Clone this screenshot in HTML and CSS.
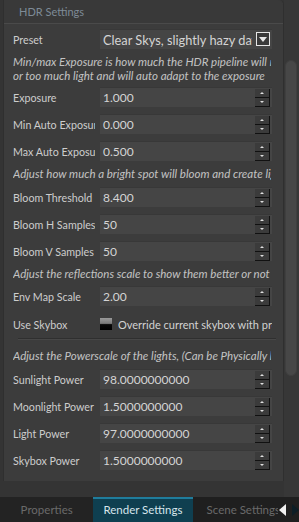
FILE: index.html
```html
<!DOCTYPE html>
<html>
<head>
<meta charset="utf-8">
<link rel="stylesheet" href="styles.css">
</head>
<body>
<div class="app">
  <div class="main">
    <div class="content">
      <div class="group">
        <div class="group-title">HDR Settings</div>
        <div class="group-body">
          <div class="row row-preset">
            <div class="label">Preset</div>
            <div class="combo">
              <span class="combo-text">Clear Skys, slightly hazy day</span>
              <span class="combo-btn"><svg width="8" height="5" viewBox="0 0 8 5"><path d="M0 0H8L4 5Z" fill="#e8e8e8"/></svg></span>
            </div>
          </div>
          <div class="desc d1">Min/max Exposure is how much the HDR pipeline will react to too little<br>or too much light and will auto adapt to the exposure</div>

          <div class="row r-after1">
            <div class="label">Exposure</div>
            <div class="field"><span class="val">1.000</span><span class="spin"><span class="sb"><i class="up"></i></span><span class="sb"><i class="dn"></i></span></span></div>
          </div>
          <div class="row">
            <div class="label">Min Auto Exposure</div>
            <div class="field"><span class="val">0.000</span><span class="spin"><span class="sb"><i class="up"></i></span><span class="sb"><i class="dn"></i></span></span></div>
          </div>
          <div class="row">
            <div class="label">Max Auto Exposure</div>
            <div class="field"><span class="val">0.500</span><span class="spin"><span class="sb"><i class="up"></i></span><span class="sb"><i class="dn"></i></span></span></div>
          </div>

          <div class="desc d2">Adjust how much a bright spot will bloom and create light</div>

          <div class="row r-first">
            <div class="label">Bloom Threshold</div>
            <div class="field"><span class="val">8.400</span><span class="spin"><span class="sb"><i class="up"></i></span><span class="sb"><i class="dn"></i></span></span></div>
          </div>
          <div class="row">
            <div class="label">Bloom H Samples</div>
            <div class="field"><span class="val">50</span><span class="spin"><span class="sb"><i class="up"></i></span><span class="sb"><i class="dn"></i></span></span></div>
          </div>
          <div class="row">
            <div class="label">Bloom V Samples</div>
            <div class="field"><span class="val">50</span><span class="spin"><span class="sb"><i class="up"></i></span><span class="sb"><i class="dn"></i></span></span></div>
          </div>

          <div class="desc d2">Adjust the reflections scale to show them better or not</div>

          <div class="row r-env">
            <div class="label">Env Map Scale</div>
            <div class="field"><span class="val">2.00</span><span class="spin"><span class="sb"><i class="up"></i></span><span class="sb"><i class="dn"></i></span></span></div>
          </div>
          <div class="row r-check">
            <div class="label">Use Skybox</div>
            <div class="check-wrap"><span class="checkbox"></span><span class="check-text">Override current skybox with preset</span></div>
          </div>
          <div class="sep"></div>
          <div class="desc d3">Adjust the Powerscale of the lights, (Can be Physically based)</div>

          <div class="row r-first">
            <div class="label">Sunlight Power</div>
            <div class="field"><span class="val">98.0000000000</span><span class="spin"><span class="sb"><i class="up"></i></span><span class="sb"><i class="dn"></i></span></span></div>
          </div>
          <div class="row">
            <div class="label">Moonlight Power</div>
            <div class="field"><span class="val">1.5000000000</span><span class="spin"><span class="sb"><i class="up"></i></span><span class="sb"><i class="dn"></i></span></span></div>
          </div>
          <div class="row">
            <div class="label">Light Power</div>
            <div class="field"><span class="val">97.0000000000</span><span class="spin"><span class="sb"><i class="up"></i></span><span class="sb"><i class="dn"></i></span></span></div>
          </div>
          <div class="row">
            <div class="label">Skybox Power</div>
            <div class="field"><span class="val">1.5000000000</span><span class="spin"><span class="sb"><i class="up"></i></span><span class="sb"><i class="dn"></i></span></span></div>
          </div>
        </div>
      </div>
    </div>
    <div class="scrollbar"><div class="handle"></div></div>
  </div>
  <div class="tabs">
    <div class="tab">Properties</div>
    <div class="tab active">Render Settings</div>
    <div class="tab">Scene Settings</div>
    <div class="arrows">
      <svg width="7" height="12" viewBox="0 0 7 12"><path d="M7 0V12L0 6Z" fill="#f0f0f0"/></svg>
      <svg width="7" height="12" viewBox="0 0 7 12"><path d="M0 0V12L7 6Z" fill="#0d1e26"/></svg>
    </div>
  </div>
</div>
</body>
</html>
```

FILE: styles.css
```css
html, body {
  margin: 0;
  padding: 0;
  background: #353535;
}
body {
  width: 299px;
  height: 522px;
  overflow: hidden;
  font-family: "Lato", "Liberation Sans", sans-serif;
  font-size: 11px;
  color: #cfcfcf;
}
.app {
  display: flex;
  flex-direction: column;
  height: 522px;
}
.main {
  height: 497px;
  display: flex;
  background: #343434;
}
.content {
  width: 284px;
  padding-left: 3px;
  box-sizing: border-box;
}
.group {
  background: #3c3c3c;
  border-left: 1px solid #2f2f2f;
  border-right: 1px solid #2f2f2f;
  border-top-right-radius: 5px;
  height: 481px;
  box-sizing: border-box;
}
.group-title {
  height: 24px;
  line-height: 24px;
  padding-left: 15px;
  color: #7e8b97;
  background: #393939;
  border-bottom: 1px solid #4a4a4a;
  box-sizing: border-box;
  font-size: 11px;
  border-top-right-radius: 5px;
}
.group-body {
  padding: 5px 0 0 9px;
}
.row {
  display: flex;
  align-items: center;
  height: 20px;
  margin-top: 7px;
}
.row-preset { margin-top: 0; }
.r-after1 { margin-top: 4px; }
.r-first { margin-top: 6px; }
.r-env { margin-top: 5px; }
.r-check { margin-top: 8px; }
.label {
  width: 82px;
  margin-right: 5px;
  white-space: nowrap;
  overflow: hidden;
  color: #cdcdcd;
  font-size: 10.7px;
}
.field, .combo {
  width: 172px;
  height: 20px;
  background: #454545;
  border-top: 1px solid #383838;
  box-sizing: border-box;
  display: flex;
  align-items: center;
  position: relative;
}
.val, .combo-text {
  padding-left: 3px;
  color: #d4d4d4;
  white-space: nowrap;
  overflow: hidden;
  flex: 1;
  font-size: 12px;
}
.combo-text {
  margin-right: 20px;
  font-size: 12.8px;
}
.combo-btn {
  position: absolute;
  right: 2px;
  top: 2px;
  width: 14px;
  height: 14px;
  border: 1px solid #e6e6e6;
  box-sizing: border-box;
  background: #3a3a3a;
  display: flex;
  align-items: center;
  justify-content: center;
}
.spin {
  position: absolute;
  right: 2px;
  top: 1px;
  width: 15px;
  display: flex;
  flex-direction: column;
}
.sb {
  height: 9px;
  background: #3b3b3b;
  border-right: 1px solid #111;
  border-bottom: 1px solid #111;
  box-sizing: border-box;
  display: flex;
  align-items: center;
  justify-content: center;
}
.sb i {
  width: 0;
  height: 0;
  border-left: 2px solid transparent;
  border-right: 2px solid transparent;
}
.sb i.up { border-bottom: 2px solid #e0e0e0; }
.sb i.dn { border-top: 2px solid #e0e0e0; }
.desc {
  font-style: italic;
  color: #c3c3c3;
  line-height: 14px;
  white-space: nowrap;
  overflow: hidden;
  width: 258px;
  font-size: 11.5px;
}
.d1 { margin-top: 6px; }
.d2 { margin-top: 6px; }
.d3 { margin-top: 9px; }
.check-wrap {
  display: flex;
  align-items: center;
  width: 172px;
  overflow: hidden;
  white-space: nowrap;
}
.checkbox {
  width: 12px;
  height: 12px;
  flex: none;
  background: linear-gradient(#9a9a9a 0%, #7a7a7a 45%, #080808 55%, #000 100%);
  margin-right: 6px;
}
.check-text { color: #d2d2d2; font-size: 11px; }
.sep {
  height: 1px;
  background: #2f2f2f;
  border-bottom: 1px solid #474747;
  width: 258px;
  margin-top: 4px;
  margin-left: 5px;
}
.scrollbar {
  width: 15px;
  background: #373737;
  padding-top: 60px;
  box-sizing: border-box;
}
.handle {
  width: 12px;
  height: 316px;
  background: #474747;
  border-radius: 6px;
  border: 1px solid #3f3f3f;
  margin-left: 1px;
  box-sizing: border-box;
}
.tabs {
  height: 25px;
  background: #1f1f1f;
  display: flex;
  align-items: stretch;
  position: relative;
  font-size: 11.5px;
}
.tab {
  line-height: 25px;
  color: #6a6a6a;
  text-align: center;
}
.tab:nth-child(1) { width: 94px; background: #232323; }
.tab.active {
  width: 100px;
  background: #0f3f50;
  color: #d8e6ec;
  border-top: 2px solid #1f7c9c;
  box-sizing: border-box;
  line-height: 22px;
}
.tab:nth-child(3) { width: 86px; padding-left: 14px; text-align: left; white-space: nowrap; overflow: hidden; box-sizing: border-box; }
.arrows {
  display: flex;
  align-items: center;
  gap: 6px;
  padding-left: 1px;
}
```
